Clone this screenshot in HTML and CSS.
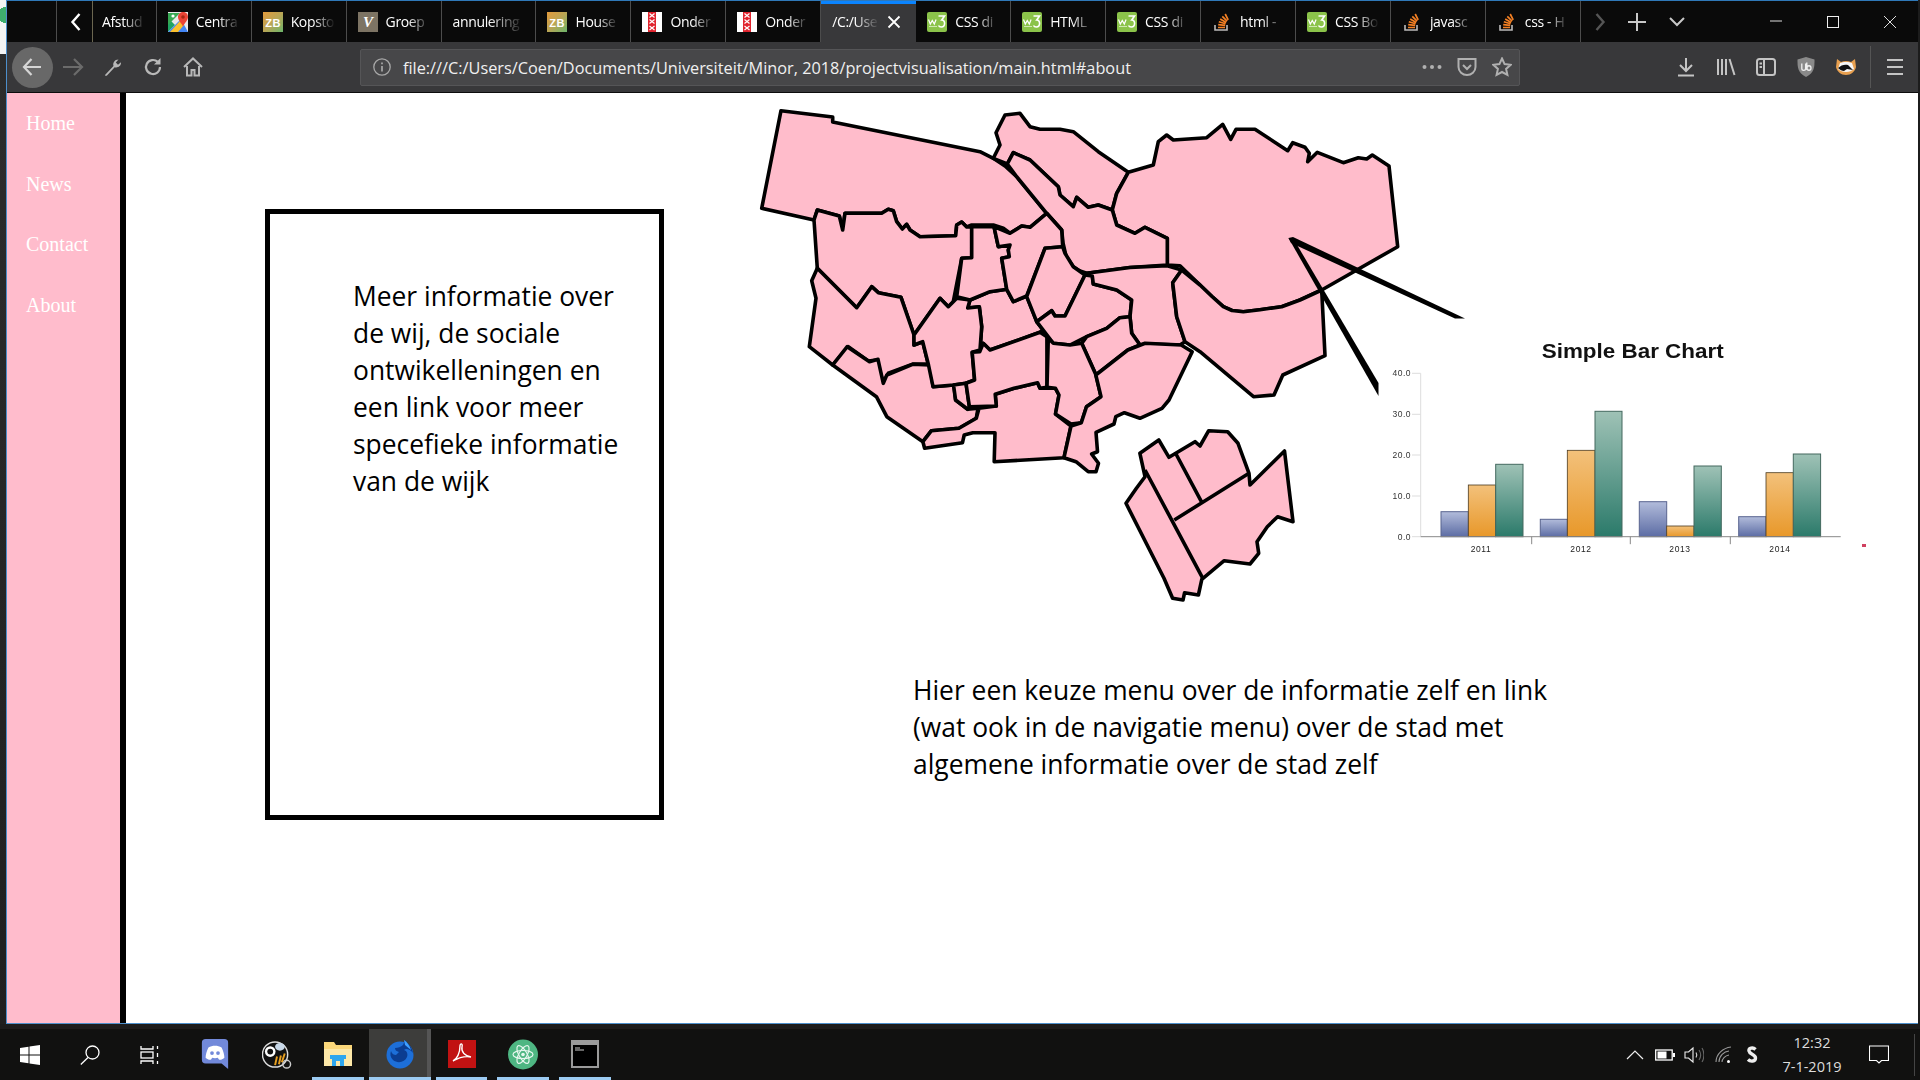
FILE: index.html
```html
<!DOCTYPE html>
<html lang="nl">
<head>
<meta charset="utf-8">
<title>main.html</title>
<link rel="stylesheet" href="styles.css">
</head>
<body>
<svg class="defs" width="0" height="0" aria-hidden="true">
  <defs>
    <symbol id="zb" viewBox="0 0 20 20">
      <rect width="20" height="20" fill="url(#zbg)"/>
      <text x="10" y="14.500" class="zb-text">ZB</text>
    </symbol>
    <linearGradient id="zbg" x1="0" y1="0" x2="1" y2="1">
      <stop offset="0" stop-color="#e39a3c"/><stop offset=".5" stop-color="#b9a555"/><stop offset="1" stop-color="#6bb56b"/>
    </linearGradient>
    <symbol id="w3" viewBox="0 0 20 20">
      <rect width="20" height="20" rx="2" fill="#8bc34a"/>
      <path d="M1.500 7.500l1.800 4.500 2-3.500 2 3.500 1.800-4.500" fill="none" stroke="#fff" stroke-width="1.200"/>
      <path d="M11.500 4h6l-2.800 4c3.900 0 3.900 7-.4 7-1.300 0-2.300-.5-2.800-1.500" fill="none" stroke="#fff" stroke-width="1.600"/>
      <path d="M2 14.500h8" stroke="#cfe8b0" stroke-width="1"/>
    </symbol>
    <symbol id="ams" viewBox="0 0 20 20">
      <rect width="20" height="20" fill="#fff"/>
      <rect x="6" width="8" height="20" fill="#e0242e"/>
      <path d="M7.500 1.500l5 4m0-4l-5 4M7.500 7.500l5 4m0-4l-5 4M7.500 14l5 4m0-4l-5 4" stroke="#fff" stroke-width="1.200"/>
    </symbol>
    <symbol id="so" viewBox="0 0 20 20">
      <path d="M3 13v5h12v-5" fill="none" stroke="#bcbbbb" stroke-width="1.600"/>
      <path d="M6 15.500h7M6.200 12.600l7 .7M6.800 9.800l6.800 1.900M8.200 7l6 3.400M10.300 4.400l4.800 4.800M13.200 2l3 5.800" fill="none" stroke="#f48024" stroke-width="1.700"/>
    </symbol>
    <symbol id="maps" viewBox="0 0 20 20">
      <rect width="20" height="20" fill="#e8e8e8"/>
      <path d="M0 20V6l7 7-7 7z" fill="#1fa463"/>
      <path d="M0 20l13-13 7 13z" fill="#4285f4"/>
      <path d="M0 13L12 1 0 1z" fill="#36a852"/>
      <path d="M2 20L12 9l4 4-6 7z" fill="#fbc02d"/>
      <path d="M15 0c3.500 0 5 2.500 5 5 0 3-3 5.500-5 9.500-1.500-3.500-5-6-5-9.500C10 2.500 12 0 15 0z" fill="#ea4335"/>
      <circle cx="15" cy="5" r="1.800" fill="#a52714"/>
      <circle cx="5" cy="4" r="1.600" fill="#fff"/>
    </symbol>
    <symbol id="vv" viewBox="0 0 20 20">
      <rect width="20" height="20" fill="#7d7464"/>
      <text x="10" y="15" class="v-text">V</text>
    </symbol>
    <linearGradient id="barB" x1="0" y1="0" x2="0" y2="1"><stop offset="0" stop-color="#b2bcdb"/><stop offset="1" stop-color="#5c6ca4"/></linearGradient>
    <linearGradient id="barO" x1="0" y1="0" x2="0" y2="1"><stop offset="0" stop-color="#f3c17b"/><stop offset="1" stop-color="#e8982a"/></linearGradient>
    <linearGradient id="barG" x1="0" y1="0" x2="0" y2="1"><stop offset="0" stop-color="#9fc2b6"/><stop offset="1" stop-color="#2b7a6a"/></linearGradient>
  </defs>
</svg>

<div class="screen">
  <div class="upper">
    <div class="backstrip"></div>
    <div class="window">
      <div class="tabbar">
        <div class="tab-scroll">
          <svg class="ico-12" viewBox="0 0 12 20"><path d="M9.500 2L2.500 10l7 8" fill="none" stroke="#fff" stroke-width="2.400"/></svg>
        </div>
        <div class="tab tab-first"><span class="tab-label">Afstud</span></div>
        <div class="tab"><svg class="fav"><use href="#maps"/></svg><span class="tab-label">Centra</span></div>
        <div class="tab"><svg class="fav"><use href="#zb"/></svg><span class="tab-label">Kopsto</span></div>
        <div class="tab"><svg class="fav"><use href="#vv"/></svg><span class="tab-label">Groep</span></div>
        <div class="tab"><span class="tab-label">annulering</span></div>
        <div class="tab"><svg class="fav"><use href="#zb"/></svg><span class="tab-label">House</span></div>
        <div class="tab"><svg class="fav"><use href="#ams"/></svg><span class="tab-label">Onder</span></div>
        <div class="tab"><svg class="fav"><use href="#ams"/></svg><span class="tab-label">Onder</span></div>
        <div class="tab tab-active"><span class="tab-label">/C:/Use</span>
          <svg class="ico-14" viewBox="0 0 14 14"><path d="M1.500 1.500l11 11m0-11l-11 11" stroke="#fff" stroke-width="1.800"/></svg>
        </div>
        <div class="tab"><svg class="fav"><use href="#w3"/></svg><span class="tab-label">CSS di</span></div>
        <div class="tab"><svg class="fav"><use href="#w3"/></svg><span class="tab-label">HTML</span></div>
        <div class="tab"><svg class="fav"><use href="#w3"/></svg><span class="tab-label">CSS di</span></div>
        <div class="tab"><svg class="fav"><use href="#so"/></svg><span class="tab-label">html -</span></div>
        <div class="tab"><svg class="fav"><use href="#w3"/></svg><span class="tab-label">CSS Bo</span></div>
        <div class="tab"><svg class="fav"><use href="#so"/></svg><span class="tab-label">javasc</span></div>
        <div class="tab"><svg class="fav"><use href="#so"/></svg><span class="tab-label">css - H</span></div>
        <div class="tab-tool t38"><svg class="ico-12" viewBox="0 0 12 20"><path d="M2.500 2l7 8-7 8" fill="none" stroke="#555" stroke-width="2.400"/></svg></div>
        <div class="tab-tool t37"><svg class="ico-18" viewBox="0 0 18 18"><path d="M9 0v18M0 9h18" stroke="#c8c8c8" stroke-width="2"/></svg></div>
        <div class="tab-tool t42"><svg class="ico-18" viewBox="0 0 18 18"><path d="M2 5l7 7 7-7" fill="none" stroke="#c8c8c8" stroke-width="2"/></svg></div>
        <div class="win-spacer"></div>
        <div class="win-btn"><svg class="ico-14" viewBox="0 0 14 14"><path d="M1 6h12" stroke="#ddd" stroke-width="1"/></svg></div>
        <div class="win-btn"><svg class="ico-14" viewBox="0 0 14 14"><rect x="1.500" y="1.500" width="11" height="11" fill="none" stroke="#eee" stroke-width="1"/></svg></div>
        <div class="win-btn"><svg class="ico-14" viewBox="0 0 14 14"><path d="M1 1l12 12m0-12L1 13" stroke="#ddd" stroke-width="1"/></svg></div>
      </div>

      <div class="toolbar">
        <div class="tool-btn"><span class="back-circle"><svg class="ico-22" viewBox="0 0 22 22"><path d="M20 11H3M10.500 3L3 11l7.500 8" fill="none" stroke="#d5d5d5" stroke-width="2.200"/></svg></span></div>
        <div class="tool-btn"><svg class="ico-22" viewBox="0 0 22 22"><path d="M1 11h18M12 3l8 8-8 8" fill="none" stroke="#6b6b6b" stroke-width="2.200"/></svg></div>
        <div class="tool-btn"><svg class="ico-20" viewBox="0 0 20 20"><path d="M2 18l8.500-9c-1-3 1-6.500 5-6.500l-2.700 3 2.200 2.300 3-2.500c.2 4-3.300 5.800-6.300 5L4 18.500c-.8.500-2.500 0-2-.500z" fill="#b8b8b8"/></svg></div>
        <div class="tool-btn"><svg class="ico-20" viewBox="0 0 20 20"><path d="M17 10a7 7 0 1 1-2.200-5.100" fill="none" stroke="#b8b8b8" stroke-width="2.200"/><path d="M17.500 1v6.500H11z" fill="#b8b8b8"/></svg></div>
        <div class="tool-btn"><svg class="ico-20" viewBox="0 0 20 20"><path d="M1 10l9-8.500 9 8.500M4 9v9.500h4.500V13h3v5.500H16V9" fill="none" stroke="#b8b8b8" stroke-width="2"/></svg></div>
        <div class="urlbar">
          <svg class="ico-20 url-info" viewBox="0 0 20 20"><circle cx="10" cy="10" r="8.200" fill="none" stroke="#a8a8a8" stroke-width="1.300"/><path d="M10 9v5.500M10 5.500v1.800" stroke="#a8a8a8" stroke-width="1.700"/></svg>
          <span class="url-text">file:///C:/Users/Coen/Documents/Universiteit/Minor, 2018/projectvisualisation/main.html#about</span>
          <div class="url-actions">
            <div class="url-btn"><svg class="ico-20" viewBox="0 0 20 20"><circle cx="2.500" cy="10" r="2" fill="#b0b0b0"/><circle cx="10" cy="10" r="2" fill="#b0b0b0"/><circle cx="17.500" cy="10" r="2" fill="#b0b0b0"/></svg></div>
            <div class="url-btn"><svg class="ico-20" viewBox="0 0 20 20"><path d="M1.500 2h17v8c0 4.500-4 8-8.500 8S1.500 14.500 1.500 10z" fill="none" stroke="#b0b0b0" stroke-width="2"/><path d="M6 8l4 4 4-4" fill="none" stroke="#b0b0b0" stroke-width="2"/></svg></div>
            <div class="url-btn"><svg class="ico-20" viewBox="0 0 20 20"><path d="M10 1.500l2.600 5.600 6 .7-4.500 4.100 1.300 6L10 15l-5.400 2.900 1.300-6L1.400 7.800l6-.7z" fill="none" stroke="#b0b0b0" stroke-width="2"/></svg></div>
          </div>
        </div>
        <div class="tool-right">
          <div class="tool-btn"><svg class="ico-20" viewBox="0 0 20 20"><path d="M10 1v12M4 8l6 6 6-6" fill="none" stroke="#c4c4c4" stroke-width="2"/><path d="M2 18.500h16" stroke="#c4c4c4" stroke-width="2"/></svg></div>
          <div class="tool-btn"><svg class="ico-20" viewBox="0 0 20 20"><path d="M2 2v16M6 2v16M10 2v16M13.500 2l5 16" stroke="#c4c4c4" stroke-width="2"/></svg></div>
          <div class="tool-btn"><svg class="ico-20" viewBox="0 0 20 20"><rect x="1" y="2" width="18" height="16" rx="2.500" fill="none" stroke="#c4c4c4" stroke-width="2"/><path d="M8 2v16M3.500 6.500h2.500M3.500 10h2.500" stroke="#c4c4c4" stroke-width="2"/></svg></div>
          <div class="tool-btn"><svg class="ico-20" viewBox="0 0 20 20"><path d="M10 0l8.500 2.500c0 8 0 13-8.500 17.500C1.500 15.500 1.500 10.500 1.500 2.500z" fill="#8a8a8a"/><path d="M5.800 6.500v5c0 2.500 3.800 2.500 3.800 0v-5M10.800 5.500v7.500M11 11c0-3 4-3 4 0s-4 3-4 0z" fill="none" stroke="#f0f0f0" stroke-width="1.300"/></svg></div>
          <div class="tool-btn"><svg class="ico-20" viewBox="0 0 20 20"><path d="M1 2l4 3c3-1.500 7-1.500 10 0l4-3 1 8c-1 4.500-5 8-10 8S1 14.500 0 10z" fill="#e8a050"/><path d="M4 6c3-1.500 9-1.500 12 0l2 6c-4 4-12 4-16 0z" fill="#f6f6f6"/><path d="M2 11c3-3 7-4 10-3l5 5-6-1-3 2c-2 0-4-1-6-3z" fill="#111"/></svg></div>
          <div class="tool-sep"></div>
          <div class="tool-menu"><svg class="ico-20" viewBox="0 0 20 20"><path d="M2 3h16M2 10h16M2 17h16" stroke="#c4c4c4" stroke-width="2.200"/></svg></div>
        </div>
      </div>

      <div class="page">
        <nav class="sidenav">
          <a class="nav-link">Home</a>
          <a class="nav-link">News</a>
          <a class="nav-link">Contact</a>
          <a class="nav-link">About</a>
        </nav>
        <main class="content">
          <svg class="canvas" viewBox="126 93 1792 930" aria-label="Kaart en grafiek">
            <g class="map">
              <polygon points="781,110.700 832.700,117 832.700,122 980,151.700 993.300,158.300 1005,166 1016.700,176.700 1046.700,213.300 1030,227.300 1021.700,226 1010,233.300 1003.300,228.300 993.300,225 971.700,225 966.700,227 961.700,222 956.700,225 955.700,235.700 920,236.700 910,230 906.700,224.300 902.300,229 896.700,221.700 893.300,210.700 888.300,209.300 881.700,213.300 845,213.300 842.700,230 839.300,216 817.300,210 814,220 761.700,208.300"/>
              <polygon points="993.300,158.300 1000,145 996,132.700 1005,115 1020,113.300 1030,126.700 1040,129.300 1060,129.300 1073.300,131.700 1098.300,151.700 1128.300,172.300 1116.700,193.300 1112.300,210 1098.300,205 1088.300,207.300 1076.700,197.300 1073.300,206.700 1060,195 1058.300,186.700 1030,160 1013.300,152.700 1007.300,164"/>
              <polygon points="1128.300,172.300 1153.300,165 1158.300,141.700 1166.700,135 1173.300,140 1206.700,137.700 1222.700,124.300 1230.700,139.300 1236,129.300 1255,129.300 1287.700,150.700 1292.700,142.700 1305,147.300 1309.300,153.300 1307.700,161.700 1317.300,152.300 1343.300,162.700 1358.300,157.700 1366.700,159 1372.300,155 1389,166 1397.700,246.700 1321.700,290 1300,300 1281.700,306.700 1260,309.700 1243.300,311.700 1232,310.500 1223.300,306.700 1212,296.500 1200,285 1180,265.700 1167.300,265 1167.300,238.300 1145,227.300 1135,233.300 1116.700,225 1112.300,210 1116.700,193.300"/>
              <polygon points="1013.300,152.700 1030,160 1058.300,186.700 1060,195 1073.300,206.700 1076.700,197.300 1088.300,207.300 1098.300,205 1112.300,210 1116.700,225 1135,233.300 1145,227.300 1167.300,238.300 1167.300,265 1130,267.500 1086.700,273.300 1080,271 1073.300,266.700 1066,256 1063,243 1061.700,230 1046.700,213.300 1016.700,176.700 1007.300,164"/>
              <polygon points="817.300,210 814,220 817.300,268.300 856.700,307.700 871.700,286.700 878.300,292.700 901,297.300 914,335 940,298.300 948.300,306.700 953.300,301.700 961.700,258.300 971.700,257.700 971.700,226.700 966.700,227 961.700,222 956.700,225 955.700,235.700 920,236.700 910,230 906.700,224.300 902.300,229 896.700,221.700 893.300,210.700 888.300,209.300 881.700,213.300 845,213.300 842.700,230 839.300,216"/>
              <polygon points="817.300,268.300 811.700,280.700 816,298.300 809.300,346.700 832.700,365 848.300,346.700 868.300,361 876.700,360 883.300,383.300 888.300,373.300 913.300,364 928.300,364 922.700,341.700 914,345 914,335 901,297.300 878.300,292.700 871.700,286.700 856.700,307.700"/>
              <polygon points="832.700,365 847.200,346.700 869.500,361.700 878,359.300 883.300,383.300 886.800,375 912.600,364.300 929.800,365 933.200,386.700 953.900,385 955.600,400 967.700,409.300 978,408.300 976.300,418.300 959,428.300 931.500,430.700 922.900,441.700 886.800,416.700 876.400,396.700"/>
              <polygon points="922.900,441.700 924.600,448.300 962.500,442.700 964.200,435 972.800,432.700 995,432.700 994.200,461.700 1064,457.700 1071,426 1055.500,414 1059,395 1055.500,388.300 1040,388.300 1037.600,382.700 1014,388.300 995.200,394.300 996.300,406 979,408.300 976.300,418.300 959,428.300 931.500,430.700"/>
              <polygon points="970,300 990,291.700 1006.700,289.300 1013.300,301.700 1026.700,296 1036.700,321.700 1043,330 1040,332.300 990,350 983.200,343.300 980,350 981.700,326.700 979.300,306.700 967.700,308"/>
              <polygon points="914,335 940,298.300 948.300,306.700 953.300,301.700 956.700,298.300 970,300 967.700,308 979.300,306.700 981.700,326.700 980,350 972.200,352.300 974.600,380 966,383.300 953.500,385 933,386.700 928.500,365 922.700,341.700 914,345"/>
              <polygon points="953.500,385 955.600,400 967.700,409.300 969.400,406.700 966,383.300"/>
              <polygon points="983.200,343.300 990,350 1040,332.300 1046.900,336.700 1047,387.300 1040,388.300 1037.600,382.700 1014,388.300 995.200,394.300 996.300,406 969.400,406.700 966,383.300 974.600,380 972.200,352.300 979.700,351.700"/>
              <polygon points="971.700,226.700 971.700,257.700 961.700,258.300 956.700,296.700 970,300 990,291.700 1006.700,289.300 1001.700,258.300 1009.300,256.700 1008.300,250 1010,245 998.300,246.700 994,226.700"/>
              <polygon points="994,226.700 1010,233.300 1021.700,226 1030,227.300 1046.700,213.300 1061.700,230 1062.700,246.700 1045,248.300 1026.700,296 1013.300,301.700 1006.700,289.300 1001.700,258.300 1009.300,256.700 1008.300,250 1010,245 998.300,246.700"/>
              <polygon points="1045,248.300 1062.700,246.700 1065,253.300 1073.300,266.700 1085,275 1065,316 1055,316 1051.700,310.700 1036.700,321.700 1026.700,296.700"/>
              <polygon points="1085,275 1092.300,276 1093.300,284 1116.700,290 1131.700,300 1130,316.700 1120,317.700 1106.700,328.300 1086.700,336.700 1070,345 1053.300,343.300 1036.700,321.700 1051.700,310.700 1055,316 1065,316"/>
              <polygon points="1086.700,273.300 1130,267.500 1167.300,265.700 1181.700,270 1172.700,282.700 1176.700,316.700 1185,341.700 1180,345 1145,344 1140,345 1131.700,333.300 1130,316.700 1131.700,300 1116.700,290 1093.300,284 1092.300,276"/>
              <polygon points="1120,317.700 1130,316.700 1131.700,333.300 1140,345 1128,350 1096,375 1081.700,343.300 1086.700,336.700 1106.700,328.300"/>
              <polygon points="1048.300,338.300 1053.300,343.300 1070,345 1081.700,343.300 1096,375 1101,396.700 1086.500,406.700 1081.300,422.700 1071,424 1055.500,414 1059,395 1055.500,388.300 1047,387.300"/>
              <polygon points="1095.800,375 1127.800,350 1145,343.300 1181.200,345 1192.200,351.700 1169,400 1162,408.300 1139.900,418.300 1124.400,412.700 1115.800,416.700 1114,424 1096,432.300 1097.500,451.700 1091.600,454 1098.500,463.300 1096,471.700 1088.200,471.700 1076,461.700 1064,457.700 1071,426 1081.300,422.700 1086.500,406.700 1101,396.700"/>
              <polygon points="1181.700,270 1172.700,282.700 1176.700,316.700 1185,341.700 1200,351.700 1253.500,396.700 1274,395 1282.800,375 1325,355.700 1321.700,290 1300,300 1281.700,306.700 1260,309.700 1243.300,311.700 1232,310.500 1223.300,306.700 1212,296.500 1200,285"/>
              <polygon points="1139.900,453.300 1158.800,440 1169,457.300 1195,441.700 1200,446 1208.700,430.700 1227.700,431.700 1238,443.300 1249,473.300 1250,485 1284.500,451 1293,521.700 1277.600,516.700 1267.300,526.700 1257,541.700 1258.700,553.300 1250,564 1224.200,560.700 1201.800,579.300 1198.400,595 1184.600,592.700 1183,600 1172.600,598.300 1164,578.300 1126,503.300 1136.400,488.300 1145,476.700"/>
              <path class="map-line" d="M1145 470L1202.800 578.300M1174.300 520L1249 473.300M1176 454L1201.800 502.300"/>
            </g>
            <polygon class="pointer" points="1288.500,238 1293,237 1465,318.500 1455,318.500 1291,243"/>
            <polygon class="pointer" points="1288.500,238 1293,238 1378.500,383 1378.500,396"/>

            <g class="chart">
              <text class="chart-title" x="1541.700" y="358" textLength="182" lengthAdjust="spacingAndGlyphs">Simple Bar Chart</text>
              <path class="chart-grid" d="M1420.700 373.300V536.700M1412 373.300h8.700M1412 414.300h8.700M1412 455h8.700M1412 496h8.700M1412 536.700h8.700"/>
              <text class="chart-tick" x="1411" y="376">40.0</text>
              <text class="chart-tick" x="1411" y="417">30.0</text>
              <text class="chart-tick" x="1411" y="458">20.0</text>
              <text class="chart-tick" x="1411" y="499">10.0</text>
              <text class="chart-tick" x="1411" y="539.500">0.0</text>

              <rect class="bar-b" x="1441" y="511.700" width="27.300" height="25"/>
              <rect class="bar-o" x="1468.300" y="485" width="27.300" height="51.700"/>
              <rect class="bar-g" x="1495.700" y="464.300" width="27.300" height="72.400"/>
              <rect class="bar-b" x="1540.300" y="519.300" width="27" height="17.400"/>
              <rect class="bar-o" x="1567.300" y="450.300" width="27.700" height="86.400"/>
              <rect class="bar-g" x="1595" y="411.300" width="27" height="125.400"/>
              <rect class="bar-b" x="1639.300" y="501.700" width="27.400" height="35"/>
              <rect class="bar-o" x="1666.700" y="526" width="27.300" height="10.700"/>
              <rect class="bar-g" x="1694" y="466" width="27.300" height="70.700"/>
              <rect class="bar-b" x="1738.700" y="516.700" width="27.300" height="20"/>
              <rect class="bar-o" x="1766" y="472.700" width="27.300" height="64"/>
              <rect class="bar-g" x="1793.300" y="454" width="27.300" height="82.700"/>

              <path class="chart-axis" d="M1420.700 536.700H1840.700M1531.700 536.700v7.500M1630.300 536.700v7.500M1730.300 536.700v7.500"/>
              <text class="chart-year" x="1481" y="552">2011</text>
              <text class="chart-year" x="1581" y="552">2012</text>
              <text class="chart-year" x="1680" y="552">2013</text>
              <text class="chart-year" x="1780" y="552">2014</text>
              <rect class="chart-mark" x="1862" y="544" width="4" height="3"/>
            </g>
          </svg>
          <section class="info-box">
            <p class="note">Meer informatie over<br>de wij, de sociale<br>ontwikelleningen en<br>een link voor meer<br>specefieke informatie<br>van de wijk</p>
          </section>
          <p class="note note-free">Hier een keuze menu over de informatie zelf en link<br>(wat ook in de navigatie menu) over de stad met<br>algemene informatie over de stad zelf</p>
        </main>
      </div>
    </div>
  </div>

  <footer class="taskbar">
    <div class="tb-sys"><svg class="ico-20" viewBox="0 0 20 20"><path d="M0 3l8.500-1.200V9.500H0zM9.500 1.600L20 0v9.500H9.500zM0 10.500h8.500v7.700L0 17zM9.500 10.500H20V20L9.500 18.400z" fill="#fff"/></svg></div>
    <div class="tb-sys"><svg class="ico-20" viewBox="0 0 20 20"><circle cx="12.500" cy="7.500" r="6.500" fill="none" stroke="#fff" stroke-width="1.300"/><path d="M8 12.500L.8 19.500" stroke="#fff" stroke-width="1.300"/></svg></div>
    <div class="tb-sys"><svg class="ico-20" viewBox="0 0 20 20"><path d="M1 1v3h12V1M1 19v-3h12v3M17.500 1v3M17.500 8v4M17.500 16v3" fill="none" stroke="#fff" stroke-width="1.300"/><rect x="1" y="7" width="12" height="6" fill="none" stroke="#fff" stroke-width="1.300"/></svg></div>
    <div class="tb-app"><svg class="ico-28" viewBox="0 0 28 32"><path d="M4 0h20a4 4 0 0 1 4 4v28l-7-6H4a4 4 0 0 1-4-4V4a4 4 0 0 1 4-4z" fill="#7289da"/><path d="M7 9c4-2.500 10-2.500 14 0 2 4 3 8 3 11-3 2.500-5 2.500-6 1.500l-1-1.500c-2 .6-4 .6-6 0l-1 1.500c-1 1-3 1-6-1.500 0-3 1-7 3-11z" fill="#fff"/><circle cx="10.800" cy="15" r="2" fill="#7289da"/><circle cx="17.200" cy="15" r="2" fill="#7289da"/></svg></div>
    <div class="tb-app"><svg class="ico-30" viewBox="0 0 30 32"><circle cx="13" cy="16" r="13" fill="#111" stroke="#ddd" stroke-width="1.500"/><circle cx="8" cy="13" r="5.500" fill="#fff"/><circle cx="8" cy="13" r="3" fill="#111"/><path d="M15 18l-2 9M19 17l-2 9M23 15l-3 9" stroke="#e8a020" stroke-width="2"/><ellipse cx="18" cy="8" rx="5" ry="4" fill="#c8d8e8"/><circle cx="25" cy="26" r="4" fill="none" stroke="#ccc" stroke-width="1.500"/></svg></div>
    <div class="tb-app tb-open"><svg class="ico-28" viewBox="0 0 28 28"><path d="M0 2h10l2 3h16v21H0z" fill="#fbd77a"/><path d="M0 9h28v17H0z" fill="#fde8a8"/><path d="M8 26V17h12v9h-4v-5h-4v5z" fill="#2ea6ee"/><rect x="6" y="15" width="16" height="4" fill="#2ea6ee"/></svg></div>
    <div class="tb-app tb-active"><svg class="ico-28" viewBox="0 0 28 30"><circle cx="14" cy="16" r="13.500" fill="#1d6fd8"/><path d="M19 1c2 3 7 6 8 13-3-4-7-5-9-3 3 1 4 4 3 7-2 5-9 7-14 3-3-3-3-6-2-9 1 3 3 4 5 4l3-3c-3-1-4-2-4-4 3 0 6-1 8-3 1-2 1-3 2-5z" fill="#0b3d91"/><path d="M18 1c3 2 6 6 7 10l-6-5z" fill="#3fa0ff"/></svg></div>
    <div class="tb-app tb-open"><svg class="ico-28" viewBox="0 0 28 28"><rect width="28" height="28" fill="#c11212"/><path d="M5 21c4-2 7-8 7-15 0-3 3-3 2 1-1 5 3 9 9 10-5-1-11 0-18 4z" fill="none" stroke="#fff" stroke-width="1.400"/></svg></div>
    <div class="tb-app tb-open"><svg class="ico-30" viewBox="0 0 30 30"><circle cx="15" cy="15" r="15" fill="#4eb682"/><g fill="none" stroke="#e6f6ee" stroke-width="1.200"><ellipse cx="15" cy="15" rx="10" ry="4"/><ellipse cx="15" cy="15" rx="10" ry="4" transform="rotate(60 15 15)"/><ellipse cx="15" cy="15" rx="10" ry="4" transform="rotate(120 15 15)"/></g><circle cx="15" cy="15" r="1.800" fill="#e6f6ee"/></svg></div>
    <div class="tb-app tb-open"><svg class="ico-28" viewBox="0 0 28 28"><rect x="1" y="1" width="26" height="26" fill="#000" stroke="#9a9a9a" stroke-width="2"/><rect x="2" y="2" width="24" height="3" fill="#9a9a9a"/><path d="M4 8h5M4 10h9" stroke="#ccc" stroke-width="1"/></svg></div>

    <div class="tray">
      <svg class="ico-18" viewBox="0 0 18 18"><path d="M1 13l8-8 8 8" fill="none" stroke="#eee" stroke-width="1.200"/></svg>
      <svg class="tray-battery" viewBox="0 0 20 12"><rect x=".7" y="1" width="16.500" height="10" fill="none" stroke="#fff" stroke-width="1.300"/><rect x="2.500" y="2.500" width="9" height="7" fill="#fff"/><rect x="18" y="4" width="2" height="4" fill="#fff"/></svg>
      <svg class="ico-20" viewBox="0 0 20 20"><path d="M1 7h3.500L9 3v14l-4.500-4H1z" fill="none" stroke="#eee" stroke-width="1.100"/><path d="M12 7.500c1 1.500 1 3.500 0 5" fill="none" stroke="#ddd" stroke-width="1.100"/><path d="M15 5c2 3 2 7 0 10M18 3c2.500 4 2.500 10 0 14" fill="none" stroke="#666" stroke-width="1.100"/></svg>
      <svg class="ico-18" viewBox="0 0 18 18"><path d="M1 16c0-8 7-14 15-15M4 16c0-6 5-10.500 10-11M7 16c0-3 3-6.500 7-7" fill="none" stroke="#9a9a9a" stroke-width="1.100"/><circle cx="13.500" cy="15.500" r="1.500" fill="#fff"/></svg>
      <svg class="tray-s" viewBox="0 0 12 18"><path d="M9.500 3.500C7 1 2.500 2 3 5c.5 3.500 6.500 3 6.500 7 0 3.500-5 4-7.500 1.500" fill="none" stroke="#eee" stroke-width="3.400"/></svg>
      <div class="clock"><span>12:32</span><span>7-1-2019</span></div>
      <svg class="tray-note" viewBox="0 0 20 20"><path d="M.5 1h19v14.500h-7L10 18l-2.500-2.500h-7z" fill="none" stroke="#fff" stroke-width="1.100"/></svg>
      <div class="tray-edge"></div>
    </div>
  </footer>
</div>
</body>
</html>
```

FILE: styles.css
```css
* { box-sizing: border-box; }
html, body { margin: 0; padding: 0; }
body { width: 1920px; height: 1080px; overflow: hidden; background: #1c1c1c; font-family: "Open Sans", sans-serif; }
.defs { position: absolute; }
.screen { display: flex; flex-direction: column; width: 1920px; height: 1080px; }

.ico-12 { width: 12px; height: 20px; display: block; }
.ico-14 { width: 14px; height: 14px; display: block; flex: none; }
.ico-18 { width: 18px; height: 18px; display: block; }
.ico-20 { width: 20px; height: 20px; display: block; }
.ico-22 { width: 22px; height: 22px; display: block; }
.ico-28 { width: 28px; height: 30px; display: block; }
.ico-30 { width: 30px; height: 31px; display: block; }

.upper { display: flex; height: 1024px; flex: none; }
.backstrip { width: 6px; flex: none; background:
  radial-gradient(circle 8px at 6px 15px, #3fae6e 99%, transparent),
  linear-gradient(#f3f3f3 0, #f3f3f3 54px, #2c2c2c 54px, #1f1f1f 100%); }
.window { width: 1912px; flex: none; display: flex; flex-direction: column; border-left: 1px solid #4d8fcb; border-top: 1px solid #2f78b8; border-bottom: 1px solid #4d8fcb; }

.tabbar { display: flex; height: 41px; flex: none; padding-left: 49px; background: #0a0a0a; color: #fff; }
.tab-scroll { width: 36px; flex: none; display: flex; align-items: center; padding-left: 13px; border-left: 1px solid #4c4c4c; }
.tab { width: 94.95px; flex: none; display: flex; align-items: center; gap: 8px; padding: 0 11px; border-right: 1px solid #4c4c4c; }
.tab-first { width: 64.7px; padding-left: 9px; border-left: 1px solid #6b6650; }
.fav { width: 20px; height: 20px; flex: none; }
.tab-label { flex: 1; min-width: 0; overflow: hidden; white-space: nowrap; font-size: 14px; letter-spacing: -.35px; -webkit-mask-image: linear-gradient(to right, #000 50%, transparent 100%); mask-image: linear-gradient(to right, #000 50%, transparent 100%); }
.tab-active { background: #38383a; border-top: 3px solid #0a84ff; border-right: 0; padding-bottom: 3px; padding-right: 15px; }
.zb-text { font: bold 11px "Liberation Sans", sans-serif; fill: #fff; text-anchor: middle; letter-spacing: .4px; }
.v-text { font: italic bold 15px "Liberation Serif", serif; fill: #fff; text-anchor: middle; }
.tab-tool { flex: none; display: flex; align-items: center; justify-content: center; }
.t38 { width: 38px; } .t37 { width: 37px; } .t42 { width: 42px; }
.win-spacer { flex: 1; }
.win-btn { width: 57px; flex: none; display: flex; align-items: center; justify-content: center; }

.toolbar { display: flex; align-items: center; height: 51px; flex: none; padding-left: 6px; background: #38383a; border-bottom: 1px solid #0c0c0c; }
.tool-btn { width: 40px; flex: none; display: flex; align-items: center; justify-content: center; }
.back-circle { width: 41px; height: 41px; flex: none; margin-right: 2px; border-radius: 50%; background: #686868; display: flex; align-items: center; justify-content: center; }
.urlbar { width: 1160px; height: 37px; flex: none; margin-left: 147px; display: flex; align-items: center; padding-left: 11px; background: #474749; border: 1px solid #555557; border-radius: 2px; color: #f0f0f0; }
.url-info { flex: none; margin-right: 11px; }
.url-text { font-size: 16.3px; white-space: nowrap; padding-top: 2px; }
.url-actions { margin-left: auto; display: flex; }
.url-btn { width: 35px; display: flex; justify-content: center; }
.tool-right { display: flex; align-items: center; margin-left: 146px; }
.tool-sep { width: 1px; height: 42px; background: #555; margin-left: 4px; }
.tool-menu { width: 48px; display: flex; justify-content: center; }

.page { flex: 1; min-height: 0; display: flex; background: #fff; }
.sidenav { width: 119px; flex: none; background: #ffbccc; border-right: 6px solid #000; }
.nav-link { display: flex; align-items: center; height: 60.8px; padding-left: 19px; font: 20px "Liberation Serif", serif; color: #fff; }
.content { flex: 1; min-width: 0; position: relative; display: flex; align-items: flex-start; }
.canvas { position: absolute; left: 0; top: 0; width: 1792px; height: 930px; }

.info-box { width: 399px; height: 611px; flex: none; margin: 116px 0 0 139px; padding: 64px 0 0 83px; border: 5px solid #000; position: relative; background: #fff; }
.note { margin: 0; font-size: 26.4px; line-height: 37px; color: #000; white-space: nowrap; }
.note-free { margin: 579px 0 0 249px; position: relative; }

.map polygon { fill: #ffbccb; stroke: #000; stroke-width: 3.600; stroke-linejoin: round; }
.map-line { fill: none; stroke: #000; stroke-width: 3.600; }
.pointer { fill: #000; }
.chart { filter: blur(.4px); }
.chart-title { font: bold 20px "Liberation Sans", sans-serif; fill: #111; }
.chart-tick { font: 8.5px "Liberation Sans", sans-serif; fill: #333; text-anchor: end; letter-spacing: .5px; }
.chart-year { font: 8.5px "Liberation Sans", sans-serif; fill: #222; text-anchor: middle; letter-spacing: .6px; }
.chart-grid { fill: none; stroke: #ddd; stroke-width: 1; }
.chart-axis { fill: none; stroke: #888; stroke-width: 1; }
.bar-b { fill: url(#barB); stroke: #59648f; stroke-width: 1; }
.bar-o { fill: url(#barO); stroke: #4a3a20; stroke-width: .8; }
.bar-g { fill: url(#barG); stroke: #44695f; stroke-width: 1; }
.chart-mark { fill: #d04060; }

.taskbar { margin-top: 5px; flex: 1; min-height: 0; display: flex; align-items: center; background: #111110; color: #eee; }
.tb-sys { width: 60px; flex: none; display: flex; justify-content: center; }
.tb-app { width: 61.7px; height: 100%; flex: none; display: flex; align-items: center; justify-content: center; position: relative; padding-bottom: 1px; }
.tb-app:nth-child(4) { margin-left: 4px; }
.tb-open::after, .tb-active::after { content: ""; position: absolute; bottom: 0; left: 5px; right: 5px; height: 3px; background: #9ccbf2; }
.tb-active { background: linear-gradient(to right, #3d3d3b 93%, #555 93%); }
.tb-active::after { left: 0; right: 0; }

.tray { margin-left: auto; display: flex; align-items: center; height: 100%; }
.tray-battery { width: 20px; height: 12px; margin-left: 11px; }
.tray .ico-20 { margin-left: 9px; }
.tray .ico-18 { margin-left: 11px; }
.tray-s { width: 12px; height: 18px; margin-left: 13px; }
.clock { display: flex; flex-direction: column; align-items: center; width: 80px; margin-left: 14px; font-size: 14.500px; line-height: 24px; color: #ddd; }
.tray-note { width: 20px; height: 20px; margin-left: 17px; }
.tray-edge { width: 1px; height: 42px; background: #444; margin: 0 5px 0 25px; }
```
